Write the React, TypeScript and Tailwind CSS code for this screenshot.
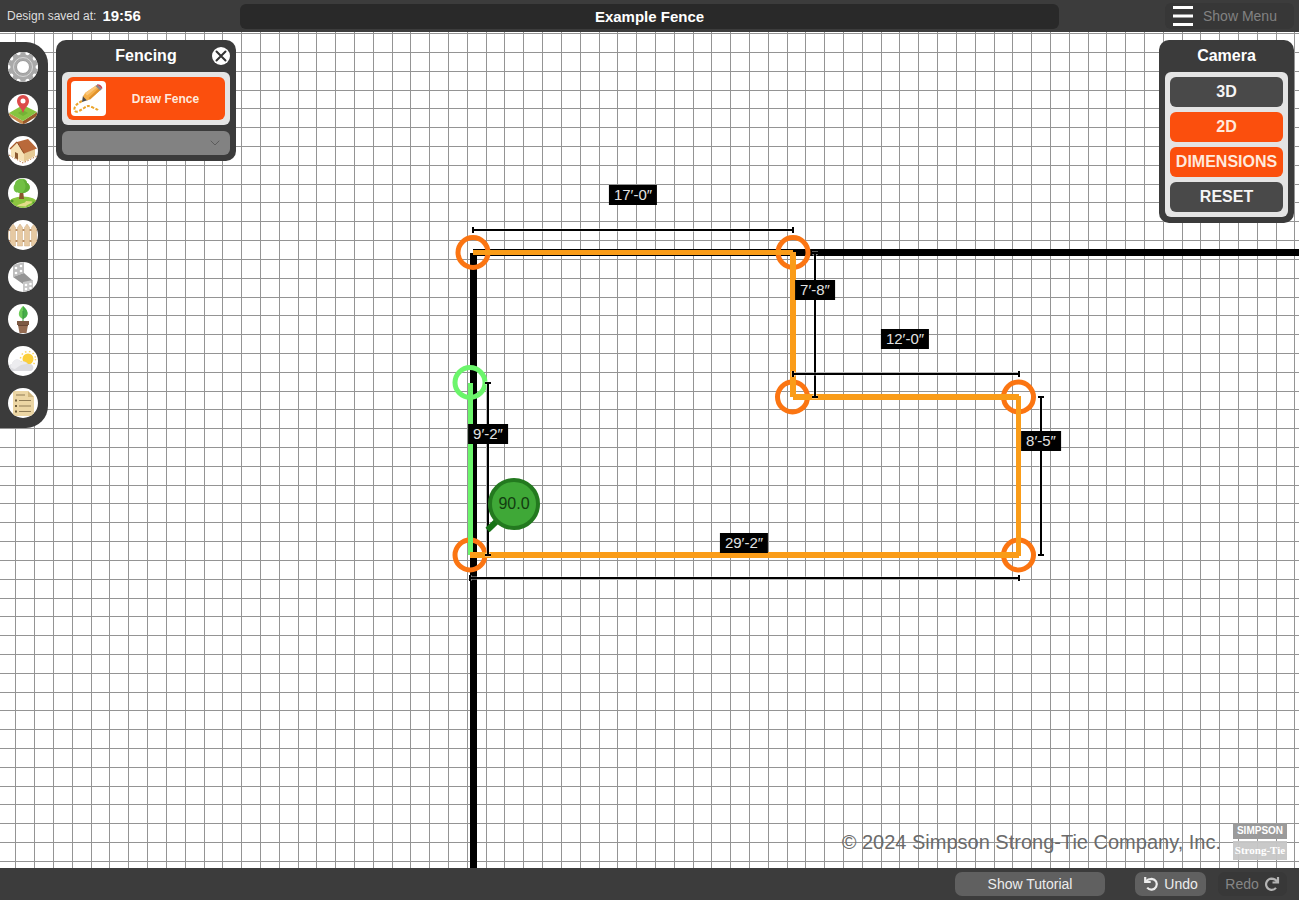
import React from "react";
import { ChevronDown } from "lucide-react";

const PITCH = 18.81;
const GRID_LEFT = 15.9;
const GRID_TOP = 1.7;

const gridPath = [
  ...Array.from({ length: 220 }, (_, i) => `M${Math.floor(GRID_LEFT + (i - 1) * PITCH)} 0h1v3000h-1z`),
  ...Array.from({ length: 120 }, (_, i) => `M0 ${Math.floor(GRID_TOP + i * PITCH)}h4200v1h-4200z`),
].join("");

type Point = { x: number; y: number };

const corners: Point[] = [
  { x: 473, y: 220.5 },
  { x: 793, y: 220.5 },
  { x: 792.5, y: 365 },
  { x: 1018.5, y: 365 },
  { x: 1018.5, y: 523 },
  { x: 470, y: 523 },
];

const rulers: { from: Point; to: Point }[] = [
  { from: { x: 473, y: 198 }, to: { x: 793, y: 198 } },
  { from: { x: 815, y: 221 }, to: { x: 815, y: 365 } },
  { from: { x: 793, y: 342 }, to: { x: 1019, y: 342 } },
  { from: { x: 1041, y: 365 }, to: { x: 1041, y: 523 } },
  { from: { x: 470, y: 546 }, to: { x: 1019, y: 546 } },
  { from: { x: 488, y: 351 }, to: { x: 488, y: 523 } },
];

const labels = [
  { text: "17′-0″", x: 633, y: 163 },
  { text: "7′-8″", x: 815, y: 258 },
  { text: "12′-0″", x: 905, y: 307 },
  { text: "8′-5″", x: 1041, y: 409 },
  { text: "29′-2″", x: 744, y: 511 },
  { text: "9′-2″", x: 488, y: 402 },
];

function rulerPath({ from, to }: { from: Point; to: Point }) {
  const line = `M${from.x} ${from.y}L${to.x} ${to.y}`;
  return from.y === to.y
    ? `${line}M${from.x} ${from.y - 3}v6M${to.x} ${to.y - 3}v6`
    : `${line}M${from.x - 3} ${from.y}h6M${to.x - 3} ${to.y}h6`;
}

function Drawing() {
  return (
    <div className="absolute inset-0 overflow-hidden">
      <svg className="absolute inset-0 h-full w-full" aria-hidden="true">
        <path d={gridPath} fill="#000" fillOpacity="0.42" shapeRendering="crispEdges" />
        <path d="M473.5 3000V221" stroke="#000" strokeWidth="7" />
        <path d="M473 220.5H4200" stroke="#000" strokeWidth="7" />
        <g fill="none" stroke="#fb7512" strokeWidth="5">
          {corners.map((c) => (
            <circle key={`${c.x}-${c.y}`} cx={c.x} cy={c.y} r="15" />
          ))}
        </g>
        <circle cx="470" cy="350.5" r="15" fill="none" stroke="#6bf56b" strokeWidth="5" />
        <path d="M470.5 351V523" stroke="#6bf56b" strokeWidth="5" />
        <g stroke="#fa9c18" strokeLinecap="butt">
          <path d="M473 220.5H793" strokeWidth="5" />
          <path d="M793 220V365" strokeWidth="6" />
          <path d="M793 365H1019" strokeWidth="6" />
          <path d="M1018.5 364V524" strokeWidth="5" />
          <path d="M470 523H1019" strokeWidth="6" />
        </g>
        {rulers.map((r, i) => (
          <g key={i} fill="none">
            <path d={rulerPath(r)} stroke="#fff" strokeOpacity="0.7" strokeWidth="3" />
            <path d={rulerPath(r)} stroke="#000" strokeWidth="2" />
          </g>
        ))}
        <path d="M487.500 498L498 488" stroke="#177316" strokeWidth="6" />
        <circle cx="514" cy="472" r="24" fill="#3fa837" stroke="#23791f" strokeWidth="4" />
      </svg>
      {labels.map((l) => (
        <span
          key={l.text}
          className="absolute -translate-x-1/2 -translate-y-1/2 bg-black px-[5px] text-[15px] leading-5 whitespace-nowrap text-[#e2e2e2]"
          style={{ left: l.x, top: l.y }}
        >
          {l.text}
        </span>
      ))}
      <span className="absolute top-[472px] left-[514px] -translate-x-1/2 -translate-y-1/2 text-base leading-5 text-[#123c10]">
        90.0
      </span>
    </div>
  );
}

const teeth = Array.from({ length: 10 }, (_, i) => i * 36 + 18);

function GearIcon() {
  return (
    <>
      <circle cx="15" cy="15" r="15" fill="#a9a9a9" />
      {teeth.map((a) => (
        <circle key={a} cx="15" cy="0.500" r="2" fill="#fff" transform={`rotate(${a} 15 15)`} />
      ))}
      <circle cx="15" cy="15" r="9.500" fill="none" stroke="#d6d6d6" strokeWidth="1" />
      <circle cx="15" cy="15" r="6.500" fill="#fff" stroke="#9b9b9b" strokeWidth="1" />
    </>
  );
}

function PlotIcon() {
  return (
    <>
      <path d="M1 19l14 8v4L1 22z" fill="#c98a4c" />
      <path d="M29 18l-14 9v4l14-9z" fill="#99592a" />
      <path d="M15 11l14 7-14 9L1 19z" fill="#86c440" />
      <path d="M15 16l5 3-5 3-5-3z" fill="#74b236" />
      <path d="M15 19C13 13 9 11.500 9 7a6 6 0 0 1 12 0c0 4.500-4 6-6 12z" fill="#dc4a4a" />
      <circle cx="15" cy="7" r="2.500" fill="#fff" />
    </>
  );
}

function HouseIcon() {
  return (
    <>
      <path d="M1 19l14 8 14-7" fill="none" stroke="#b9703a" strokeWidth="1" strokeDasharray="1.500 1.500" />
      <path d="M3 12l6-5 7 10v9L3 20z" fill="#f6e2b6" />
      <path d="M16 17l11-4v7l-11 6z" fill="#e6ca95" />
      <path d="M9 6l11-3 9 9.500-13 5z" fill="#b9693a" />
      <path d="M9 6l7 11.500" stroke="#8d4a20" strokeWidth="1" />
      <path d="M9 6l-7 7" stroke="#a65a2a" strokeWidth="1.200" />
      <path d="M7 16l3 1.500v6l-3-1.500z" fill="#8a5a32" />
    </>
  );
}

function TreeIcon() {
  return (
    <>
      <ellipse cx="15" cy="24.500" rx="14" ry="6" fill="#8cc63f" />
      <path d="M9 28c2-3 8-2 9-5l6 .500c0 3-5 2-6 5z" fill="#e3dc8a" />
      <path d="M12 12h3l1 9h-5z" fill="#8a552b" />
      <path d="M13 1c4-1 6 2 6 4 3 1 4 6 1 8s-5 2-7 2-6 0-7-3 0-5 1-6c0-3 3-5 6-5z" fill="#72c044" />
      <path d="M15 2c3 0 4 2 4 3 3 1 4 6 1 8s-4 2-6 2c5-4 4-9 1-13z" fill="#60ae36" />
      <circle cx="4" cy="23" r="1.500" fill="#4f962c" />
      <circle cx="26" cy="25" r="1.500" fill="#4f962c" />
    </>
  );
}

function FenceIcon() {
  return (
    <>
      <path d="M0 9h30v2H0zM0 20h30v2H0z" fill="#b98f66" />
      {[-4.5, 2.5, 9.500, 16.500, 23.500].map((x) => (
        <path key={x} d={`M${x} 7.500l2.500-3.500 2.500 3.500V26h-5z`} fill="#e6c9a2" stroke="#cfae84" strokeWidth="0.500" />
      ))}
    </>
  );
}

function BracketIcon() {
  return (
    <>
      <path d="M5 3l11-3v11l-11 4z" fill="#bdbdbd" />
      <path d="M5 15l11-4 9 8-10 3z" fill="#959595" />
      <path d="M15 20l10-2v11l-10 1z" fill="#c8c8c8" />
      <g fill="#fff">
        <circle cx="8" cy="6" r="1.300" />
        <circle cx="13" cy="4" r="1.300" />
        <circle cx="8" cy="11" r="1.300" />
        <circle cx="13" cy="9" r="1.300" />
        <circle cx="18" cy="23" r="1.300" />
        <circle cx="22.500" cy="22" r="1.300" />
        <circle cx="18" cy="27" r="1.300" />
        <circle cx="22.500" cy="26" r="1.300" />
      </g>
    </>
  );
}

function PlantIcon() {
  return (
    <>
      <path d="M15 2c-4 4-6 9-2 12l2 1c5-2 7-7 0-13z" fill="#6ccb58" />
      <path d="M15 2c7 6 5 11 0 13z" fill="#46ad48" />
      <path d="M15 7v11" stroke="#3b9440" strokeWidth="1" />
      <path d="M9 17h12v4H9z" fill="#7d5a44" />
      <path d="M10 21h10l-1.500 8h-7z" fill="#946c53" />
      <path d="M10 21h10v1H10z" fill="#684735" />
    </>
  );
}

function WeatherIcon() {
  return (
    <>
      <circle cx="20" cy="13" r="7.500" fill="none" stroke="#fbd65e" strokeWidth="1.500" strokeDasharray="1.500 2.500" />
      <circle cx="20" cy="13" r="5.500" fill="#fbcf3b" />
      <path d="M4 25c-5 0-5-6 0-7 1-5 7-6 9-2 4-1 6 0 7 2 6-1 7 5 3 7z" fill="#dcdce0" />
      <path d="M4 18c1-5 7-6 9-2 3-1 5 0 6 2-6 0-9 3-12 5-4 0-6-4-3-5z" fill="#ececef" />
    </>
  );
}

function ListIcon() {
  return (
    <>
      <path d="M5 3h15l6 6v19H5z" fill="#ecd6a4" />
      <path d="M20 3l6 6h-6z" fill="#cfb57e" />
      <path d="M8 7h9M11 12.500h12M11 18h12M11 23.500h12" stroke="#8f7c56" strokeWidth="1.200" />
      <path d="M7 12.500h2M7 18h2M7 23.500h2" stroke="#6d5c3b" strokeWidth="2" />
    </>
  );
}

const tools = [
  { name: "Settings", Icon: GearIcon },
  { name: "Location", Icon: PlotIcon },
  { name: "House", Icon: HouseIcon },
  { name: "Landscape", Icon: TreeIcon },
  { name: "Fencing", Icon: FenceIcon },
  { name: "Hardware", Icon: BracketIcon },
  { name: "Plants", Icon: PlantIcon },
  { name: "Weather", Icon: WeatherIcon },
  { name: "Materials", Icon: ListIcon },
];

function Toolbar() {
  return (
    <nav aria-label="Tools" className="mt-[10px] flex w-12 flex-col gap-3 rounded-r-[22px] bg-[#3b3b3b] py-[10px] pl-2">
      {tools.map(({ name, Icon }) => (
        <button key={name} type="button" aria-label={name} className="size-[30px] overflow-hidden rounded-full bg-white">
          <svg viewBox="0 0 30 30" className="size-[30px]">
            <Icon />
          </svg>
        </button>
      ))}
    </nav>
  );
}

function PencilIcon() {
  return (
    <svg viewBox="0 0 35 35" className="size-[35px] rounded-[4px] bg-white">
      <path
        d="M11 20C5 23 2 27 4 30c2 2 6-1 9-3 4-3 5-2 8-1 3 2 6 2 6 4"
        fill="none"
        stroke="#eba52c"
        strokeWidth="2"
        strokeDasharray="3 1.500"
      />
      <path d="M11 21l1-6.500 5 4.500z" fill="#4a4a4a" />
      <path d="M12 15.500l2-3.500L25 4.500l4.500 4.500L19 18.500l-3 1z" fill="#f5b04a" />
      <path d="M14 12L25 4.500l1.500 1.500L16 14.500z" fill="#fbc67a" />
      <path d="M19 18.500l-1.500-1.500L28 7l1.500 2z" fill="#e0922c" />
      <path d="M24.500 5l2-1.500 4.500 4.500-2 1.500z" fill="#8e8289" />
      <path d="M26 3.500c2-1.500 6.500 2.500 5 4.500z" fill="#c9474f" />
    </svg>
  );
}

function FencingPanel() {
  return (
    <section className="mt-2 w-[180px] rounded-[10px] bg-[#3b3b3b] px-[6px] pb-[6px]">
      <header className="relative flex h-8 items-center justify-center">
        <h2 className="text-base font-bold text-white">Fencing</h2>
        <button type="button" aria-label="Close" className="absolute right-0 size-[18px] rounded-full bg-white">
          <svg viewBox="0 0 18 18" className="size-[18px]" fill="none" stroke="#333" strokeWidth="2" strokeLinecap="round">
            <path d="M4.500 4.500l9 9M13.500 4.500l-9 9" />
          </svg>
        </button>
      </header>
      <div className="rounded-[6px] bg-[#e4e4e4] p-[5px]">
        <button type="button" className="flex h-[43px] w-full items-center rounded-[6px] bg-[#fb4f0d] pl-1">
          <PencilIcon />
          <span className="flex-1 text-center text-xs font-bold text-[#ffe9dc]">Draw Fence</span>
        </button>
      </div>
      <div className="relative mt-[6px]">
        <select aria-label="Fence style" className="block h-6 w-full appearance-none rounded-[6px] bg-[#828282] px-2 text-xs text-white" />
        <ChevronDown size={16} strokeWidth={1.5} className="pointer-events-none absolute top-1 right-[7px] text-[#5c5c5c]" />
      </div>
    </section>
  );
}

const cameraModes = [
  { label: "3D", active: false },
  { label: "2D", active: true },
  { label: "DIMENSIONS", active: true },
  { label: "RESET", active: false },
];

function CameraPanel() {
  return (
    <section className="mt-2 mr-[5px] w-[135px] rounded-[10px] bg-[#3b3b3b] px-[6px] pb-[6px]">
      <h2 className="flex h-8 items-center justify-center text-base font-bold text-white">Camera</h2>
      <div className="flex flex-col gap-[5px] rounded-[6px] bg-[#e4e4e4] p-[5px]">
        {cameraModes.map(({ label, active }) => (
          <button
            key={label}
            type="button"
            aria-pressed={active}
            className={
              active
                ? "h-[30px] rounded-[6px] bg-[#fb4f0d] text-base font-bold text-[#ffe9dc]"
                : "h-[30px] rounded-[6px] bg-[#494949] text-base font-bold text-[#f5f5f5]"
            }
          >
            {label}
          </button>
        ))}
      </div>
    </section>
  );
}

function TopBar() {
  return (
    <header className="grid h-8 shrink-0 grid-cols-[minmax(0,24fr)_minmax(0,82fr)_minmax(0,24fr)] items-center bg-[#3c3c3c]">
      <p className="flex items-center gap-[6px] pl-[7px] text-xs text-[#dedede]">
        Design saved at: <time className="text-[15px] font-bold text-white">19:56</time>
      </p>
      <input
        type="text"
        aria-label="Design name"
        defaultValue="Example Fence"
        className="h-[25px] rounded-[6px] bg-[#292929] text-center text-[15px] font-bold text-white"
      />
      <div className="flex justify-end pr-[5px]">
        <button type="button" className="flex h-[26px] w-[129px] items-center gap-[10px] rounded-[6px] bg-[#373737] pl-2 text-sm text-[#828282]">
          <svg viewBox="0 0 20 20" className="size-5" fill="#fff">
            <path d="M0 0h20v3H0zM0 8.500h20v3H0zM0 17h20v3H0z" />
          </svg>
          Show Menu
        </button>
      </div>
    </header>
  );
}

function TurnIcon({ flipped = false }: { flipped?: boolean }) {
  return (
    <svg
      viewBox="0 0 16 16"
      className={flipped ? "size-4 -scale-x-100" : "size-4"}
      fill="none"
      stroke="currentColor"
      strokeWidth="2.200"
    >
      {flipped ? (
        <>
          <path d="M2 1v5.500h5.500" />
          <path d="M2.500 6.200C4 3.700 6 2.700 8.500 2.700a5.600 5.600 0 1 1-4.500 9.200" />
        </>
      ) : (
        <>
          <path d="M2.200 1v5h5.500" />
          <path d="M2.500 5.500C4.500 3.400 6.500 2.800 8.800 2.800a5.400 5.400 0 1 1-4.600 8.800" />
        </>
      )}
    </svg>
  );
}

function BottomBar() {
  return (
    <footer className="flex h-8 shrink-0 items-center justify-end bg-[#3c3c3c] pr-3 text-sm">
      <button type="button" className="h-6 w-[150px] rounded-[7px] bg-[#606060] text-[#ededed]">
        Show Tutorial
      </button>
      <button type="button" className="ml-[30px] flex h-6 w-[71px] items-center justify-center gap-[5px] rounded-[7px] bg-[#606060] text-[#ededed]">
        <TurnIcon />
        Undo
      </button>
      <button type="button" disabled className="ml-3 flex h-6 w-[69px] items-center justify-center gap-[5px] rounded-[7px] bg-[#383838] text-[#868686]">
        Redo
        <span className="text-[#b4b4b4]">
          <TurnIcon flipped />
        </span>
      </button>
    </footer>
  );
}

function Credits() {
  return (
    <div className="flex items-center justify-end gap-3 pr-3 pb-2">
      <p className="text-xl leading-6 text-[#6b6b6b]">© 2024 Simpson Strong-Tie Company, Inc.</p>
      <div className="flex w-[54px] flex-col gap-[2px] text-center font-bold text-white">
        <span className="bg-[#9b9b9b] text-[10px] leading-4">SIMPSON</span>
        <span className="bg-[#c6c6c6]/95 font-['Liberation_Serif',serif] text-[11px] leading-[19px] whitespace-nowrap">
          Strong-Tie
        </span>
      </div>
    </div>
  );
}

export default function App() {
  return (
    <div className="flex h-screen flex-col bg-white pr-[2px] pb-px font-['Liberation_Sans',Arial,sans-serif]">
      <TopBar />
      <main className="relative min-h-0 flex-1">
        <Drawing />
        <div className="relative flex h-full flex-col justify-between">
          <div className="flex items-start justify-between">
            <div className="flex items-start gap-2">
              <Toolbar />
              <FencingPanel />
            </div>
            <CameraPanel />
          </div>
          <Credits />
        </div>
      </main>
      <BottomBar />
    </div>
  );
}
